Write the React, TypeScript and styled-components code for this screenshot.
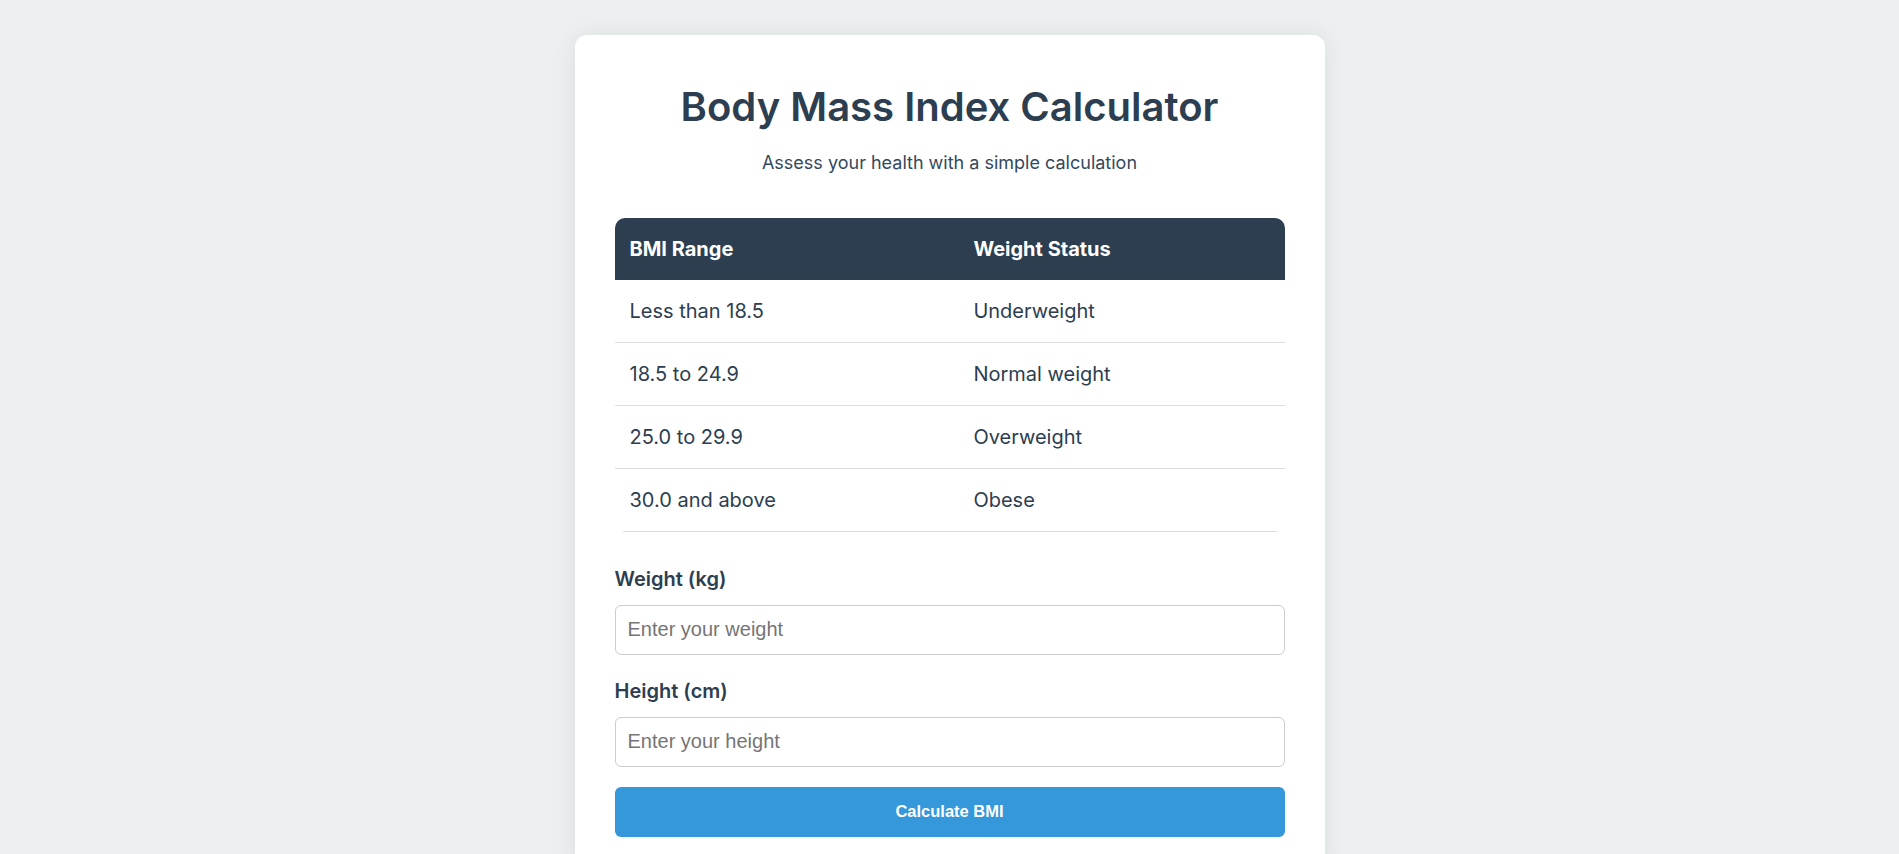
import React, { FC, useState } from 'react';
import styled, { createGlobalStyle } from 'styled-components';

const GlobalStyle = createGlobalStyle`
  html, body {
    margin: 0;
    padding: 0;
    background-color: #ecf0f1;
  }
  body {
    font-family: Inter, "Noto Sans", sans-serif;
    line-height: 1.6;
    color: #2c3e50;
  }
  * {
    box-sizing: border-box;
  }
`

const StyledPage = styled.div`
  display: flex;
  justify-content: center;
  padding-top: 35px;
  min-height: 854px;
`

const StyledCard = styled.main`
  width: 750px;
  background-color: #ffffff;
  border-radius: 12px;
  padding: 40px 40px 40px;
  box-shadow: 0 0 25px rgba(0, 0, 0, 0.08);
  align-self: flex-start;
`

const StyledTitle = styled.h1`
  margin: 0 0 10px;
  text-align: center;
  font-size: 40px;
  font-weight: 600;
  color: #2c3e50;
`

const StyledSubtitle = styled.p`
  margin: 0 0 40px;
  text-align: center;
  font-size: 18px;
  color: #34495e;
`

const StyledTable = styled.table`
  width: 100%;
  border-collapse: collapse;
  border-radius: 10px;
  overflow: hidden;
  margin-bottom: 31px;
`

const StyledHeadCell = styled.th`
  background-color: #2c3e50;
  color: #ffffff;
  text-align: left;
  font-size: 20px;
  font-weight: 700;
  padding: 15px;
`

const StyledCell = styled.td`
  padding: 15px;
  font-size: 20px;
  color: #2c3e50;
  border-bottom: 1px solid #dddddd;
`

const StyledField = styled.div<{ $last?: boolean }>`
  display: flex;
  flex-direction: column;
  margin-bottom: 20px;
`

const StyledLabel = styled.label`
  font-size: 20px;
  font-weight: 600;
  color: #2c3e50;
  margin-bottom: 10px;
`

const StyledInput = styled.input`
  width: 100%;
  height: 50px;
  padding: 0 12px;
  font-family: "Liberation Sans", Arial, sans-serif;
  font-size: 20px;
  color: #2c3e50;
  border: 1px solid #cccccc;
  border-radius: 6px;
  outline: none;

  &::placeholder {
    color: #757575;
  }
`

const StyledButton = styled.button`
  width: 100%;
  height: 50px;
  border: none;
  border-radius: 6px;
  background-color: #3498db;
  color: #ffffff;
  font-family: "Liberation Sans", Arial, sans-serif;
  font-size: 16.5px;
  font-weight: 700;
  cursor: pointer;
`

const StyledResult = styled.div`
  margin-top: 20px;
  text-align: center;
  font-size: 20px;
  font-weight: 600;
`

const ranges = [
  { range: 'Less than 18.5', status: 'Underweight' },
  { range: '18.5 to 24.9', status: 'Normal weight' },
  { range: '25.0 to 29.9', status: 'Overweight' },
  { range: '30.0 and above', status: 'Obese' },
]

const statusFor = (bmi: number) => {
  if (bmi < 18.5) return 'Underweight'
  if (bmi < 25) return 'Normal weight'
  if (bmi < 30) return 'Overweight'
  return 'Obese'
}

const App: FC = () => {
  const [weight, setWeight] = useState('');
  const [height, setHeight] = useState('');
  const [result, setResult] = useState<string | null>(null);

  const calculate = () => {
    const w = parseFloat(weight)
    const h = parseFloat(height) / 100
    if (!w || !h) {
      setResult('Please enter valid values')
      return
    }
    const bmi = w / (h * h)
    setResult(`Your BMI is ${bmi.toFixed(1)} (${statusFor(bmi)})`)
  }

  return (
    <>
      <GlobalStyle />
      <StyledPage>
        <StyledCard>
          <StyledTitle>Body Mass Index Calculator</StyledTitle>
          <StyledSubtitle>Assess your health with a simple calculation</StyledSubtitle>

          <StyledTable>
            <thead>
              <tr>
                <StyledHeadCell>BMI Range</StyledHeadCell>
                <StyledHeadCell>Weight Status</StyledHeadCell>
              </tr>
            </thead>
            <tbody>
              {ranges.map((r) => (
                <tr key={r.range}>
                  <StyledCell>{r.range}</StyledCell>
                  <StyledCell>{r.status}</StyledCell>
                </tr>
              ))}
            </tbody>
          </StyledTable>

          <StyledField>
            <StyledLabel htmlFor="weight">Weight (kg)</StyledLabel>
            <StyledInput
              id="weight"
              type="number"
              placeholder="Enter your weight"
              value={weight}
              onChange={(e) => setWeight(e.target.value)}
            />
          </StyledField>

          <StyledField>
            <StyledLabel htmlFor="height">Height (cm)</StyledLabel>
            <StyledInput
              id="height"
              type="number"
              placeholder="Enter your height"
              value={height}
              onChange={(e) => setHeight(e.target.value)}
            />
          </StyledField>

          <StyledButton onClick={calculate}>Calculate BMI</StyledButton>

          {result && <StyledResult>{result}</StyledResult>}
        </StyledCard>
      </StyledPage>
    </>
  )
}

export default App
